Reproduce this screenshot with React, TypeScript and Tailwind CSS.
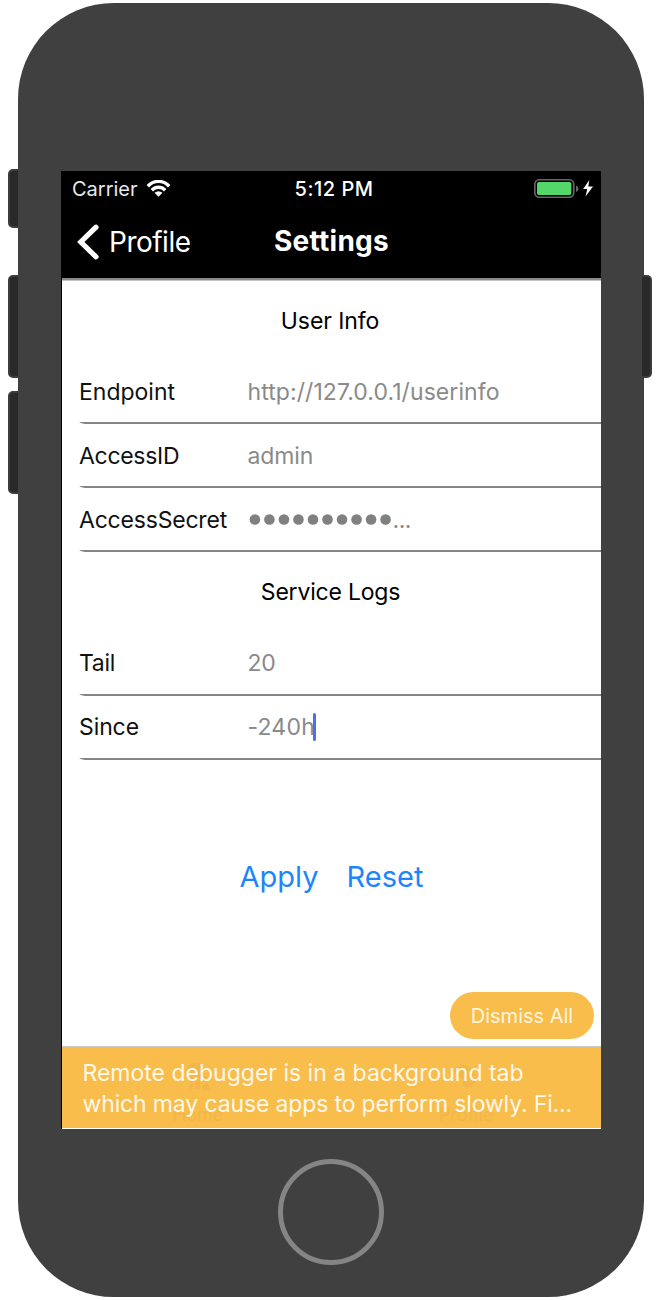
import React from "react";

type Field = { label: string; value: string; labelClass: string; valueClass: string; secret?: boolean; focused?: boolean };

const userInfo: Field[] = [
  { label: "Endpoint", value: "http://127.0.0.1/userinfo", labelClass: "tracking-[0px]", valueClass: "tracking-[0.08px]" },
  { label: "AccessID", value: "admin", labelClass: "tracking-[-0.3px]", valueClass: "tracking-[-0.1px]" },
  { label: "AccessSecret", value: "...", labelClass: "tracking-[-0.2px]", valueClass: "tracking-[-0.5px]", secret: true },
];

const serviceLogs: Field[] = [
  { label: "Tail", value: "20", labelClass: "tracking-[-0.3px]", valueClass: "tracking-[-0.4px]" },
  { label: "Since", value: "-240h", labelClass: "tracking-[-0.1px]", valueClass: "tracking-[0.2px]", focused: true },
];

function Row({ field, pad }: { field: Field; pad: string }) {
  return (
    <div className="ml-[17px] flex h-16 shrink-0 flex-col">
      <div className={`flex h-[62px] items-center ${pad}`}>
        <div className={`w-[168.5px] shrink-0 text-[#111] ${field.labelClass}`}>{field.label}</div>
        <div className={`flex items-center text-[#8a8a8a] ${field.valueClass}`}>
          {field.secret && (
            <svg width="145" height="12" viewBox="0 0 145 12" fill="#808080">
              {Array.from({ length: 10 }, (_, i) => (
                <circle key={i} cx={6.9 + i * 14.52} cy="5.5" r="5.3" />
              ))}
            </svg>
          )}
          <span>{field.value}</span>
          {field.focused && <span className="-ml-[2px] h-[28px] w-[3px] rounded-full bg-[#4a70f0]" />}
        </div>
      </div>
      <svg width="522" height="2" viewBox="0 0 522 2" className="block">
        <path d="M0 0H522V2H6Q2 1.5 0 0Z" fill="#858585" />
      </svg>
    </div>
  );
}

function SideButton({ className }: { className: string }) {
  return <div className={`absolute border-2 border-[#3c3c3c] bg-[#292929] ${className}`} />;
}

export default function App() {
  return (
    <div className="relative flex h-[1300px] w-[662px] justify-center overflow-hidden bg-white pt-[3px] font-[Inter,sans-serif]">
      <SideButton className="left-[8px] top-[169px] h-[59px] w-[16px] rounded-[5px]" />
      <SideButton className="left-[8px] top-[275px] h-[103px] w-[16px] rounded-[5px]" />
      <SideButton className="left-[8px] top-[391px] h-[103px] w-[16px] rounded-[5px]" />
      <main className="relative flex h-[1294px] w-[626px] flex-col items-center rounded-[96px] bg-[#404040] pt-[168px]">
        <section className="flex h-[958px] w-[540px] shrink-0 flex-col border-l border-black bg-white text-[23px] leading-[30px]">
          <header className="flex h-[107px] shrink-0 flex-col bg-black text-white">
            <div className="grid h-[35px] grid-cols-3 items-center px-[10px] text-[20px] leading-[24px]">
              <div className="flex items-center gap-[9px]">
                <span className="text-[#e8e8e8]">Carrier</span>
                <svg width="26" height="18" viewBox="0 0 26 18" fill="none" stroke="white" strokeWidth="3.6" className="-ml-[1px] -mt-[1px] h-[17px] w-[25px]">
                  <path d="M1.7 6.6C8-0.2 18-0.2 24.3 6.6" />
                  <path d="M5.9 10.8C10 6.7 16 6.7 20.1 10.8" />
                  <path d="M13 17.8L8.8 13.6Q13 10.2 17.2 13.6Z" fill="white" stroke="none" />
                </svg>
              </div>
              <div className="pl-[5px] text-center font-medium tracking-[0.5px]">5:12 PM</div>
              <div className="flex justify-end">
                <svg width="60" height="20" viewBox="0 0 60 20" className="-mr-[3px]">
                  <rect x="0.8" y="0.8" width="39" height="17.5" rx="4.5" fill="none" stroke="#666" strokeWidth="1.6" />
                  <rect x="3" y="3" width="34.4" height="13" rx="2" fill="#53d769" />
                  <path d="M42 6.5Q44.5 7.5 44.5 9.8T42 13Z" fill="#666" />
                  <path d="M55.3 1L49.2 10H53.3L51.5 17.5L59 7.5H54.3Z" fill="white" />
                </svg>
              </div>
            </div>
            <div className="grid h-[72px] grid-cols-[212px_115px_1fr] items-center">
              <div className="flex items-center pl-[14px] text-[28px]">
                <svg width="24" height="36" viewBox="0 0 24 36" fill="none" stroke="white" strokeWidth="5.2" strokeLinecap="round" className="-mt-[1px]">
                  <path d="M20 3.2L4.8 18L20 32.8" />
                </svg>
                <span className="ml-[9px] tracking-[-0.5px]">Profile</span>
              </div>
              <h1 className="whitespace-nowrap pb-[2px] text-[28px] font-bold tracking-[0.25px]">Settings</h1>
            </div>
          </header>
          <div className="h-[3px] shrink-0 border-t-2 border-[#8b878b] bg-[#c4c4c4]" />
          <h2 className="flex h-[79px] shrink-0 items-center justify-center pr-[3px] tracking-[-0.1px]">User Info</h2>
          {userInfo.map((f) => <Row key={f.label} field={f} pad="pt-[2px]" />)}
          <h2 className="flex h-[80px] shrink-0 items-center justify-center pr-[2px] tracking-[-0.2px]">Service Logs</h2>
          {serviceLogs.map((f) => <Row key={f.label} field={f} pad="pt-0" />)}
          <div className="mt-[100px] flex justify-center gap-[28px] text-[29px] leading-[34px] text-[#1c86fa]">
            <button>Apply</button>
            <button>Reset</button>
          </div>
          <div className="mt-auto flex shrink-0 flex-col">
            <button className="mb-[7px] mr-[7px] h-[47px] w-[144px] self-end rounded-full bg-[#f8bd4b] text-[20px] text-[#fff5df]">Dismiss All</button>
            <div className="relative h-[83px] border-b border-t border-b-white border-t-[#c7c7c7] bg-[#f8bd4b] pl-[20.5px] pt-[11px] text-[23px] leading-[30.5px] text-[#fff8e8]">
              <div className="absolute left-[110px] top-[14px] flex w-[52px] flex-col items-center text-[18px] leading-[20px] text-[#f2b748]">
                <svg width="30" height="30" viewBox="0 0 30 30" fill="currentColor" className="-ml-[4px]">
                  <path d="M5 9Q8 1 15 2Q22 2 24 10L20 12H8Z" /><path d="M9 15H12V28H9ZM14 13H19V28H14Z" /><circle cx="24" cy="18" r="3" /><circle cx="25" cy="26" r="3.5" />
                </svg>
                <span className="mt-[14px]">Home</span>
              </div>
              <div className="absolute left-[375px] top-[14px] flex w-[58px] flex-col items-center text-[18px] leading-[20px] text-[#f2b748]">
                <svg width="30" height="30" viewBox="0 0 30 30" fill="currentColor">
                  <path d="M3 9Q9 1 19 6L23 16L15 19Q4 16 3 9ZM10 21L27 18L20 26H14Z" />
                </svg>
                <span className="mt-[14px]">Profile</span>
              </div>
              <p className="relative whitespace-nowrap">
                Remote debugger is in a background tab
                <br />
                <span className="tracking-[-0.14px]">which may cause apps to perform slowly. Fi...</span>
              </p>
            </div>
          </div>
        </section>
        <button aria-label="Home" className="mt-[30px] h-[106px] w-[106px] rounded-full border-[5px] border-[#858585]" />
      </main>
      <div className="absolute left-[642px] top-[275px] h-[103px] w-[10px] rounded-r-[5px] border-2 border-l-0 border-[#3c3c3c] bg-[#292929]" />
    </div>
  );
}
